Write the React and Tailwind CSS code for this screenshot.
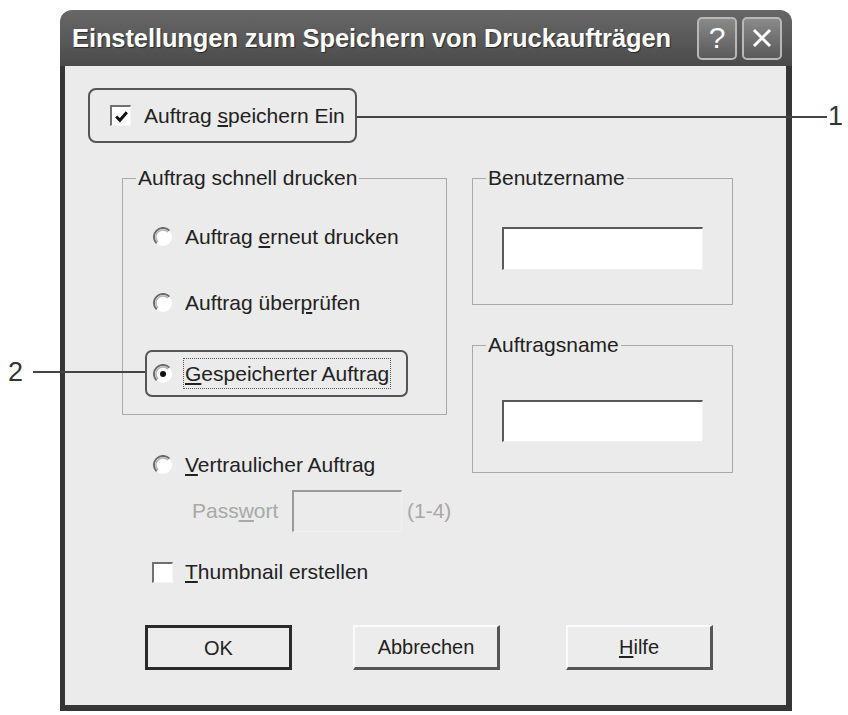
import React from 'react'

function Radio({ checked }) {
  return (
    <svg width="20" height="20" viewBox="0 0 20 20" className="shrink-0">
      <circle cx="10" cy="10" r="9" fill="#ffffff" />
      <path d="M3.6 16.4 A9 9 0 0 1 16.4 3.6" fill="none" stroke="#6a6a6a" strokeWidth="2" />
      <path d="M5 15 A7 7 0 0 1 15 5" fill="none" stroke="#b5b5b5" strokeWidth="1.5" />
      {checked && <circle cx="10" cy="10" r="3" fill="#111" />}
    </svg>
  )
}

function Checkbox({ checked }) {
  return (
    <div className="w-[21px] h-[21px] shrink-0 bg-white border-t-2 border-l-2 border-[#707070] border-r border-b border-r-[#f4f4f4] border-b-[#f4f4f4] flex items-center justify-center">
      {checked && (
        <svg width="15" height="15" viewBox="0 0 14 14">
          <path d="M2 7 L5.5 10.5 L12 3" fill="none" stroke="#111" strokeWidth="2.8" />
        </svg>
      )}
    </div>
  )
}

function TextBox({ disabled, className }) {
  return (
    <div
      className={`shrink-0 border-t-2 border-l-2 border-[#5a5a5a] border-r border-b border-r-[#f0f0f0] border-b-[#f0f0f0] ${
        disabled ? 'bg-[#ebebeb] border-t-[#9a9a9a] border-l-[#9a9a9a]' : 'bg-white'
      } ${className}`}
    />
  )
}

function Group({ title, className, children }) {
  return (
    <fieldset className={`border border-[#a9a9a9] ${className}`}>
      <legend className="ml-[13px] px-[2px] leading-[22px]">{title}</legend>
      {children}
    </fieldset>
  )
}

function Button({ children, primary }) {
  return (
    <button
      className={`w-[147px] h-[45px] bg-[#ececec] text-[20px] leading-none flex items-center justify-center ${
        primary
          ? 'border-[3px] border-[#2a2a2a]'
          : 'border-t-2 border-l-2 border-[#fbfbfb] border-r-[3px] border-b-[3px] border-r-[#555] border-b-[#555]'
      }`}
    >
      {children}
    </button>
  )
}

export default function App() {
  return (
    <div className="relative w-[848px] h-[715px] bg-white overflow-hidden font-['Liberation_Sans',Arial,sans-serif] text-[#222] text-[21px]">
      {/* WINDOW */}
      <div className="ml-[60px] mt-[10px] w-[732px] h-[701px] flex flex-col">
        {/* TITLE BAR */}
        <div className="h-[56px] rounded-t-[12px] bg-gradient-to-b from-[#676767] via-[#5a5a5a] to-[#4a4a4a] flex items-center pl-[12px] pr-[10px]">
          <span className="flex-1 whitespace-nowrap text-white font-bold text-[25.5px] tracking-[-0.1px] [text-shadow:1px_1px_1px_#2a2a2a]">
            Einstellungen zum Speichern von Druckaufträgen
          </span>
          <div className="flex gap-[5px]">
            <div className="w-[40px] h-[43px] rounded-[5px] border-2 border-[#b8b8b8] bg-gradient-to-b from-[#8a8a8a] to-[#5a5a5a] flex items-center justify-center text-white text-[30px] leading-none">
              ?
            </div>
            <div className="w-[40px] h-[43px] rounded-[5px] border-2 border-[#b8b8b8] bg-gradient-to-b from-[#8a8a8a] to-[#5a5a5a] flex items-center justify-center">
              <svg width="22" height="22" viewBox="0 0 22 22">
                <path d="M3 3 L19 19 M19 3 L3 19" stroke="#fff" strokeWidth="3" />
              </svg>
            </div>
          </div>
        </div>

        {/* BODY */}
        <div className="flex-1 bg-[#ebebeb] border-l-[5px] border-r-[6px] border-b-[6px] border-[#363636] flex flex-col">
          {/* callout 1 */}
          <div className="ml-[23px] mt-[22px] w-[269px] h-[55px] border-2 border-[#555] rounded-[8px] flex items-center pl-[20px] gap-[13px]">
            <Checkbox checked />
            <span className="whitespace-nowrap">
              Auftrag <u className="underline-offset-2">s</u>peichern Ein
            </span>
          </div>

          <div className="ml-[57px] mt-[24px] flex gap-[25px]">
            {/* LEFT COLUMN */}
            <div className="w-[325px] flex flex-col">
              <Group title="Auftrag schnell drucken" className="w-[325px] pb-[17px]">
                <div className="flex flex-col">
                  <div className="mt-[36px] h-[24px] pl-[30px] flex items-center gap-[12px]">
                    <Radio />
                    <span>
                      Auftrag <u className="underline-offset-2">e</u>rneut drucken
                    </span>
                  </div>
                  <div className="mt-[42px] h-[24px] pl-[30px] flex items-center gap-[12px]">
                    <Radio />
                    <span>
                      Auftrag über<u className="underline-offset-2">p</u>rüfen
                    </span>
                  </div>
                  <div className="mt-[35px] ml-[22px] w-[263px] h-[47px] border-2 border-[#555] rounded-[7px] flex items-center pl-[6px] gap-[10px]">
                    <Radio checked />
                    <span className="whitespace-nowrap border border-dotted border-[#555] px-[1px] leading-[29px]">
                      <u className="underline-offset-2">G</u>espeicherter Auftrag
                    </span>
                  </div>
                </div>
              </Group>

              <div className="mt-[38px] h-[24px] pl-[31px] flex items-center gap-[12px]">
                <Radio />
                <span>
                  <u className="underline-offset-2">V</u>ertraulicher Auftrag
                </span>
              </div>

              <div className="mt-[13px] h-[42px] flex items-center text-[#a8a8a8] whitespace-nowrap">
                <span className="ml-[70px] w-[100px] shrink-0">
                  Pass<u className="underline-offset-2">w</u>ort
                </span>
                <TextBox disabled className="w-[110px] h-[42px]" />
                <span className="ml-[5px] shrink-0">(1-4)</span>
              </div>

              <div className="mt-[28px] h-[24px] pl-[30px] flex items-center gap-[12px]">
                <Checkbox />
                <span>
                  <u className="underline-offset-2">T</u>humbnail erstellen
                </span>
              </div>
            </div>

            {/* RIGHT COLUMN */}
            <div className="w-[261px] flex flex-col">
              <Group title="Benutzername" className="w-[261px] pb-[34px]">
                <TextBox className="ml-[29px] mt-[38px] w-[201px] h-[43px]" />
              </Group>
              <Group title="Auftragsname" className="mt-[29px] w-[261px] pb-[30px]">
                <TextBox className="ml-[29px] mt-[44px] w-[201px] h-[42px]" />
              </Group>
            </div>
          </div>

          {/* BUTTONS */}
          <div className="ml-[80px] mt-[41px] flex">
            <Button primary>OK</Button>
            <div className="ml-[61px]">
              <Button>Abbrechen</Button>
            </div>
            <div className="ml-[66px]">
              <Button>
                <span>
                  <u className="underline-offset-2">H</u>ilfe
                </span>
              </Button>
            </div>
          </div>
        </div>
      </div>

      {/* CALLOUT ANNOTATIONS */}
      <div className="absolute left-[357px] top-[116px] w-[470px] h-[2px] bg-[#444]" />
      <span className="absolute left-[828px] top-[101px] text-[27px] leading-[30px] text-[#333]">1</span>
      <div className="absolute left-[33px] top-[371px] w-[112px] h-[2px] bg-[#444]" />
      <span className="absolute left-[8px] top-[357px] text-[27px] leading-[30px] text-[#333]">2</span>
    </div>
  )
}
